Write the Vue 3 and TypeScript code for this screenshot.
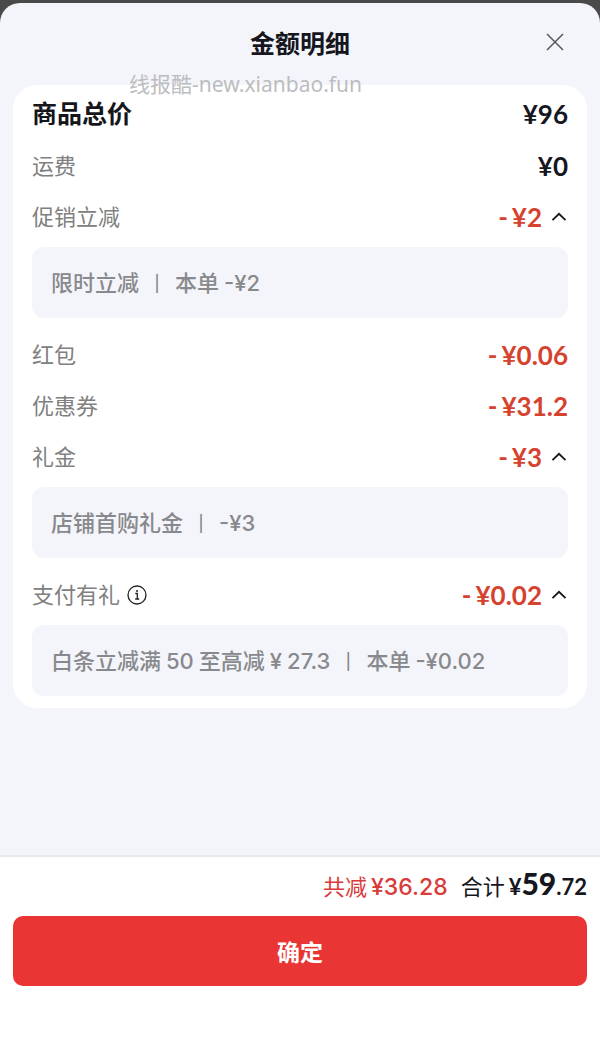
<script setup lang="ts">
import { ref } from 'vue'

interface Row {
  label: string
  amount: string
  discount?: boolean
  strong?: boolean
  info?: boolean
  detail?: string[][]
}

const rows: Row[] = [
  { label: '商品总价', amount: '¥96', strong: true },
  { label: '运费', amount: '¥0' },
  { label: '促销立减', amount: '¥2', discount: true, detail: [['限时立减'], ['本单', '-¥2']] },
  { label: '红包', amount: '¥0.06', discount: true },
  { label: '优惠券', amount: '¥31.2', discount: true },
  { label: '礼金', amount: '¥3', discount: true, detail: [['店铺首购礼金'], ['-¥3']] },
  {
    label: '支付有礼',
    amount: '¥0.02',
    discount: true,
    info: true,
    detail: [['白条立减满', '50', '至高减', '¥', '27.3'], ['本单', '-¥0.02']],
  },
]

const closed = ref<Record<string, boolean>>({})
const toggle = (label: string) => {
  closed.value[label] = !closed.value[label]
}
</script>

<template>
  <div class="page">
    <main class="sheet">
      <header class="head">
        <h1 class="title">金额明细</h1>
        <button class="close" type="button" aria-label="关闭">
          <svg width="18" height="18" viewBox="0 0 18 18" fill="none" stroke="#55565a" stroke-width="1.5">
            <path d="M1 1L17 17M17 1L1 17" />
          </svg>
        </button>
        <span class="watermark">线报酷-new.xianbao.fun</span>
      </header>

      <section class="card">
        <template v-for="row in rows" :key="row.label">
          <div class="row" :class="{ strong: row.strong }">
            <span class="label">{{ row.label }}</span>
            <button v-if="row.info" class="icon-btn" type="button" aria-label="说明">
              <svg width="20" height="20" viewBox="0 0 20 20" fill="none" stroke="#222" stroke-width="1.3">
                <circle cx="10" cy="10" r="9" />
                <path d="M8.3 8.5H10.3V14M8.2 14H12.2" />
                <circle cx="10" cy="5.9" r="1" fill="#222" stroke="none" />
              </svg>
            </button>
            <span class="amount" :class="{ discount: row.discount }">
              <span v-if="row.discount" class="minus">-</span>{{ row.amount }}
            </span>
            <button
              v-if="row.detail"
              class="icon-btn chevron"
              type="button"
              :aria-label="row.label"
              :aria-expanded="!closed[row.label]"
              @click="toggle(row.label)"
            >
              <svg width="16" height="10" viewBox="0 0 16 10" fill="none" stroke="#15161a" stroke-width="1.8">
                <path v-if="!closed[row.label]" d="M1.5 8.2L8 1.8L14.5 8.2" />
                <path v-else d="M1.5 1.8L8 8.2L14.5 1.8" />
              </svg>
            </button>
          </div>
          <p v-if="row.detail && !closed[row.label]" class="detail">
            <template v-for="(part, i) in row.detail" :key="i">
              <span v-if="i > 0" class="bar">|</span>
              <span class="part">
                <span v-for="word in part" :key="word">{{ word }}</span>
              </span>
            </template>
          </p>
        </template>
      </section>
    </main>

    <footer class="foot">
      <div class="totals">
        <span class="saved"><span>共减</span><span class="num">¥36.28</span></span>
        <span class="sum">
          <span>合计</span>
          <span class="price">¥<b>59</b>.72</span>
        </span>
      </div>
      <button class="confirm" type="button">确定</button>
    </footer>
  </div>
</template>

<style>
body {
  margin: 0;
  background: #4a4a4a;
}
</style>

<style scoped>
.page {
  box-sizing: border-box;
  display: flex;
  flex-direction: column;
  min-height: 100vh;
  padding-top: 3px;
  font-family: Inter, "Noto Sans CJK SC", sans-serif;
  font-size: 22px;
  color: #15161e;
}
button {
  padding: 0;
  border: 0;
  background: none;
  font: inherit;
  color: inherit;
  cursor: pointer;
}
.sheet {
  flex: 1;
  padding: 0 13px 40px;
  border-radius: 20px 20px 0 0;
  background: #f4f5fa;
}
.head {
  position: relative;
  display: grid;
  grid-template-columns: 1fr auto 1fr;
  align-items: center;
  height: 82px;
}
.title {
  grid-column: 2;
  margin: 0;
  font-size: 25px;
  line-height: 36px;
  font-weight: 700;
}
.close {
  display: flex;
  justify-self: end;
  margin: 0 23px 4px 0;
}
.close svg,
.icon-btn svg {
  display: block;
}
.watermark {
  position: absolute;
  left: 116px;
  bottom: -14px;
  font-family: "Noto Sans", "Noto Sans CJK SC", sans-serif;
  font-size: 21px;
  line-height: 30px;
  color: #bcbdbf;
  white-space: nowrap;
}
.card {
  padding: 3px 19px 12px;
  border-radius: 24px;
  background: #fff;
}
.row {
  display: flex;
  align-items: center;
  height: 51px;
  line-height: 32px;
}
.row.strong {
  height: 52px;
}
.label {
  color: #808080;
}
.strong .label {
  font-size: 25px;
  font-weight: 700;
  color: #15161a;
}
.amount {
  margin-left: auto;
  font-family: Lato, "Noto Sans CJK SC", sans-serif;
  font-size: 26px;
  font-weight: 700;
}
.discount {
  color: #d5432f;
}
.minus {
  margin-right: 4px;
}
.icon-btn {
  margin-left: 7px;
}
.chevron {
  margin: 0 1px 0 9px;
}
.detail {
  display: flex;
  align-items: center;
  box-sizing: border-box;
  min-height: 71px;
  margin: 5px 0 11px;
  padding: 0 19px;
  border-radius: 12px;
  background: #f4f5fa;
  color: #88898c;
  font-weight: 500;
  line-height: 32px;
}
.detail:last-child {
  margin-bottom: 0;
}
.part {
  display: flex;
  gap: 5px;
}
.bar {
  width: 36px;
  font-size: 16px;
  text-align: center;
}
.foot {
  padding: 8px 13px 59px;
  border-top: 2px solid #e9e9ec;
  background: #fff;
}
.totals {
  display: flex;
  justify-content: flex-end;
  align-items: baseline;
  gap: 13px;
  line-height: 36px;
}
.saved,
.sum {
  display: flex;
  align-items: baseline;
  gap: 4px;
}
.saved {
  color: #d93a3a;
}
.num {
  font-size: 23px;
  font-weight: 500;
}
.price {
  font-family: Lato, "Noto Sans CJK SC", sans-serif;
  font-weight: 700;
}
.price b {
  font-size: 30px;
}
.confirm {
  display: block;
  width: 100%;
  height: 70px;
  margin-top: 11px;
  border-radius: 10px;
  background: #e93635;
  color: #fff;
  font-size: 23px;
  font-weight: 700;
}
</style>
